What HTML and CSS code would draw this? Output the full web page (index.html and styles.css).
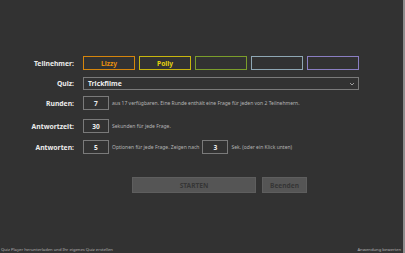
FILE: index.html
```html
<!DOCTYPE html>
<html lang="de">
  <head>
    <meta charset="UTF-8" />
    <title>Quiz Player</title>
    <link rel="stylesheet" href="styles.css">
  </head>
  <body>
    <div class="page">
      <div class="form">
        <div class="row row-players">
          <label class="label">Teilnehmer:</label>
          <div class="players">
            <div class="player player-orange">Lizzy</div>
            <div class="player player-yellow">Polly</div>
            <div class="player player-green"></div>
            <div class="player player-blue"></div>
            <div class="player player-purple"></div>
          </div>
        </div>

        <div class="row row-quiz">
          <label class="label">Quiz:</label>
          <div class="select">
            <span>Trickfilme</span>
            <svg width="6" height="4" viewBox="0 0 6 4"><polyline points="1,1 3,3 5,1" fill="none" stroke="#bbb" stroke-width="0.8"/></svg>
          </div>
        </div>

        <div class="row row-rounds">
          <label class="label">Runden:</label>
          <div class="num">7</div>
          <span class="hint">aus 17 verfügbaren. Eine Runde enthält eine Frage für jeden von 2 Teilnehmern.</span>
        </div>

        <div class="row row-time">
          <label class="label">Antwortzeit:</label>
          <div class="num">30</div>
          <span class="hint">Sekunden für jede Frage.</span>
        </div>

        <div class="row row-answers">
          <label class="label">Antworten:</label>
          <div class="num">5</div>
          <span class="hint">Optionen für jede Frage. Zeigen nach</span>
          <div class="num">3</div>
          <span class="hint">Sek. (oder ein Klick unten)</span>
        </div>

        <div class="actions">
          <button class="btn btn-start" type="button" disabled>STARTEN</button>
          <button class="btn btn-quit" type="button">Beenden</button>
        </div>
      </div>

      <div class="footer">
        <span>Quiz Player herunterladen und Ihr eigenes Quiz erstellen</span>
        <span>Anwendung bewerten</span>
      </div>
    </div>
  </body>
</html>
```

FILE: styles.css
```css
:root {
  --bg: #323232;
  --text: #ececec;
  --muted: #b4b4b4;
  --field: #7a7a7a;
  --font: "Noto Sans", "Open Sans", sans-serif;
}

* {
  margin: 0;
  padding: 0;
  box-sizing: border-box;
}

body {
  background-color: var(--bg);
  color: var(--text);
  font-family: var(--font);
}

.page {
  height: 253px;
  display: flex;
  flex-direction: column;
  border-right: 2px solid #8c8c8c;
}

.form {
  flex: 1;
  padding-top: 56px;
}

.row {
  display: flex;
  align-items: center;
  gap: 3px;
}

.label {
  width: 80px;
  padding-right: 6px;
  text-align: right;
  font-size: 6.8px;
  font-weight: 700;
  flex-shrink: 0;
}

.players {
  display: flex;
  gap: 4px;
}

.player {
  width: 52px;
  height: 14px;
  border: 1px solid;
  display: flex;
  align-items: center;
  justify-content: center;
  font-size: 6.6px;
  font-weight: 700;
}

.player-orange { border-color: #d5850c; color: #e8900e; }
.player-yellow { border-color: #c8b60e; color: #e6d40c; }
.player-green { border-color: #7b9d2b; }
.player-blue { border-color: #8fa7b4; }
.player-purple { border-color: #8a7ec2; }

.row-quiz {
  margin-top: 7px;
}

.select {
  width: 276px;
  height: 13px;
  border: 1px solid var(--field);
  display: flex;
  align-items: center;
  justify-content: space-between;
  padding: 0 3px 0 4px;
  font-size: 6.8px;
  font-weight: 700;
}

.row-rounds {
  margin-top: 6px;
}

.row-time {
  margin-top: 9px;
}

.row-answers {
  margin-top: 7px;
}

.num {
  width: 26px;
  height: 14px;
  border: 1px solid var(--field);
  display: flex;
  align-items: center;
  justify-content: center;
  font-size: 6.6px;
  font-weight: 700;
  flex-shrink: 0;
}

.hint {
  font-size: 5px;
  color: var(--muted);
  white-space: nowrap;
}

.actions {
  display: flex;
  gap: 6px;
  margin-top: 23px;
  padding-left: 132px;
}

.btn {
  height: 16px;
  border: 1px solid #5e5e5e;
  background-color: #555555;
  color: #363636;
  font-family: var(--font);
  font-size: 6.6px;
  font-weight: 700;
}

.btn-start {
  width: 124px;
}

.btn-quit {
  width: 45px;
}

.footer {
  display: flex;
  justify-content: space-between;
  padding: 0 2px 1px 1px;
  font-size: 4.2px;
  color: var(--muted);
}
```
